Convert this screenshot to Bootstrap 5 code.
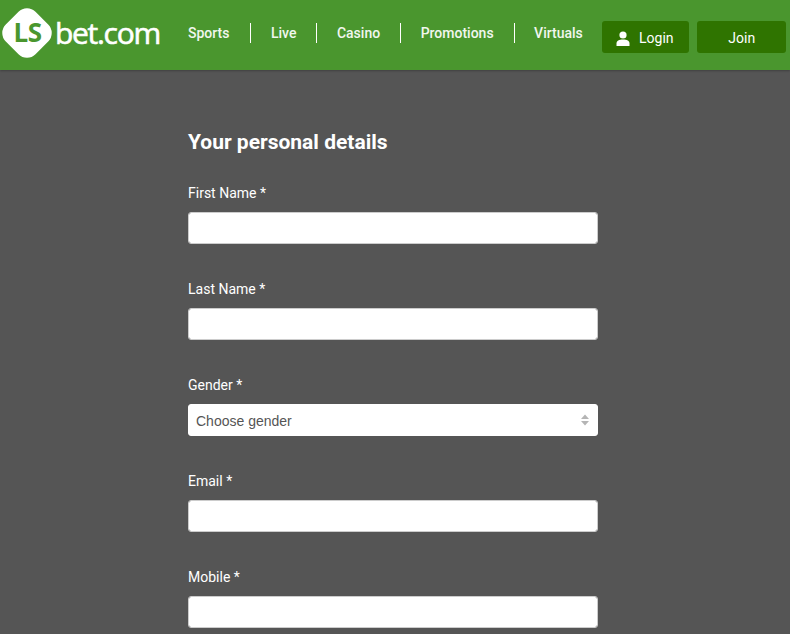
<!DOCTYPE html>
<html lang="en">
<head>
<meta charset="utf-8">
<title>LSbet.com</title>
<link href="https://cdn.jsdelivr.net/npm/bootstrap@5.3.0/dist/css/bootstrap.min.css" rel="stylesheet">
<style>
html,body{height:634px;overflow:hidden}
body{background:#555;font-family:Roboto,"Liberation Sans",sans-serif;color:#fff}
.site-head{height:70px;background:#4a962e;box-shadow:0 1px 2px rgba(0,0,0,.25)}
.brand-box{width:188px;height:70px;padding-left:1px;padding-top:0}
.brand-mark{flex:none;width:52px;height:52px;margin-top:-4px}
.brand-word{font-family:"Open Sans","Liberation Sans",sans-serif;font-size:30px;letter-spacing:-1.3px;line-height:1;color:#fff;margin-left:2px;margin-top:-4px;-webkit-text-stroke:.6px #fff}
.top-nav{height:20px;margin-top:23px}
.top-nav a{display:block;color:#f1f7ee;text-decoration:none;font-size:14px;font-weight:500;line-height:20px;padding:0 20px;border-right:1px solid #fff}
.top-nav li:first-child a{padding-left:0;padding-right:20.5px}
.top-nav li:nth-child(2) a{padding-right:19.5px}
.top-nav li:nth-child(4) a{padding-left:19.5px}
.top-nav li:last-child a{border-right:0;padding-right:0;padding-left:19.5px}
.head-btns{margin-left:19px;margin-top:21px;gap:8px}
.btn-dark-green{height:32px;background:#2f7400;color:#fff;border:0;border-radius:3px;font-size:14px;line-height:32px;padding:2px 0 0;display:flex;align-items:center;justify-content:center}
.btn-dark-green:hover{background:#2f7400;color:#fff}
.btn-login{width:87px;gap:9px;padding-right:1px}
.btn-join{width:89px;padding-left:1px}
.form-wrap{width:410px;margin-left:188px;padding-top:58px}
.form-title{font-size:21px;font-weight:700;line-height:28px;margin:0 0 28px;color:#fff;font-family:Roboto,sans-serif}
.field-row{height:96px;margin:0}
.field-label{display:block;font-size:14px;line-height:18px;margin:0 0 10px;color:#fff}
.field-input{height:32px;border-radius:3px;border:1px solid #ccc;font-size:14px;padding:0 8px;color:#555}
.field-select{background-image:none;color:#555;padding:2px 24px 0 7px;font-family:"Liberation Sans",Arial,sans-serif;border-color:#fff}
.select-box{position:relative}
.select-arrows{position:absolute;right:9px;top:10px;width:8px;height:12px;pointer-events:none}
</style>
</head>
<body>
<header class="site-head d-flex align-items-start">
  <div class="brand-box d-flex align-items-center">
    <svg class="brand-mark" viewBox="0 0 52 52" aria-hidden="true">
      <rect x="5" y="5" width="42" height="42" rx="12" fill="#fff" transform="rotate(45 26 26)"/>
      <text x="26.500" y="35" text-anchor="middle" font-family="Open Sans, sans-serif" font-size="26" font-weight="700" letter-spacing="-.5" fill="#4a962e">LS</text>
    </svg>
    <span class="brand-word">bet.com</span>
  </div>
  <ul class="top-nav list-unstyled d-flex mb-0">
    <li><a href="#">Sports</a></li>
    <li><a href="#">Live</a></li>
    <li><a href="#">Casino</a></li>
    <li><a href="#">Promotions</a></li>
    <li><a href="#">Virtuals</a></li>
  </ul>
  <div class="head-btns d-flex">
    <button type="button" class="btn btn-dark-green btn-login">
      <svg width="14" height="15" viewBox="0 0 14 15" aria-hidden="true"><circle cx="7" cy="4" r="3.6" fill="#fff"/><path d="M0.5 15v-2.5C0.5 9.8 3 8.6 7 8.6s6.500 1.200 6.500 3.900V15z" fill="#fff"/></svg>
      <span>Login</span>
    </button>
    <button type="button" class="btn btn-dark-green btn-join">Join</button>
  </div>
</header>
<main class="form-wrap">
  <h1 class="form-title">Your personal details</h1>
  <form>
    <div class="field-row">
      <label class="field-label" for="fn">First Name *</label>
      <input id="fn" class="form-control field-input" type="text">
    </div>
    <div class="field-row">
      <label class="field-label" for="ln">Last Name *</label>
      <input id="ln" class="form-control field-input" type="text">
    </div>
    <div class="field-row">
      <label class="field-label" for="gn">Gender *</label>
      <div class="select-box">
        <select id="gn" class="form-select field-input field-select"><option>Choose gender</option></select>
        <svg class="select-arrows" viewBox="0 0 8 12" aria-hidden="true"><path d="M4 0.500 8 5H0zM4 11.500 0 7h8z" fill="#b5b5b5"/></svg>
      </div>
    </div>
    <div class="field-row">
      <label class="field-label" for="em">Email *</label>
      <input id="em" class="form-control field-input" type="email">
    </div>
    <div class="field-row">
      <label class="field-label" for="mb">Mobile *</label>
      <input id="mb" class="form-control field-input" type="tel">
    </div>
  </form>
</main>
<script src="https://cdn.jsdelivr.net/npm/bootstrap@5.3.0/dist/js/bootstrap.bundle.min.js"></script>
</body>
</html>
